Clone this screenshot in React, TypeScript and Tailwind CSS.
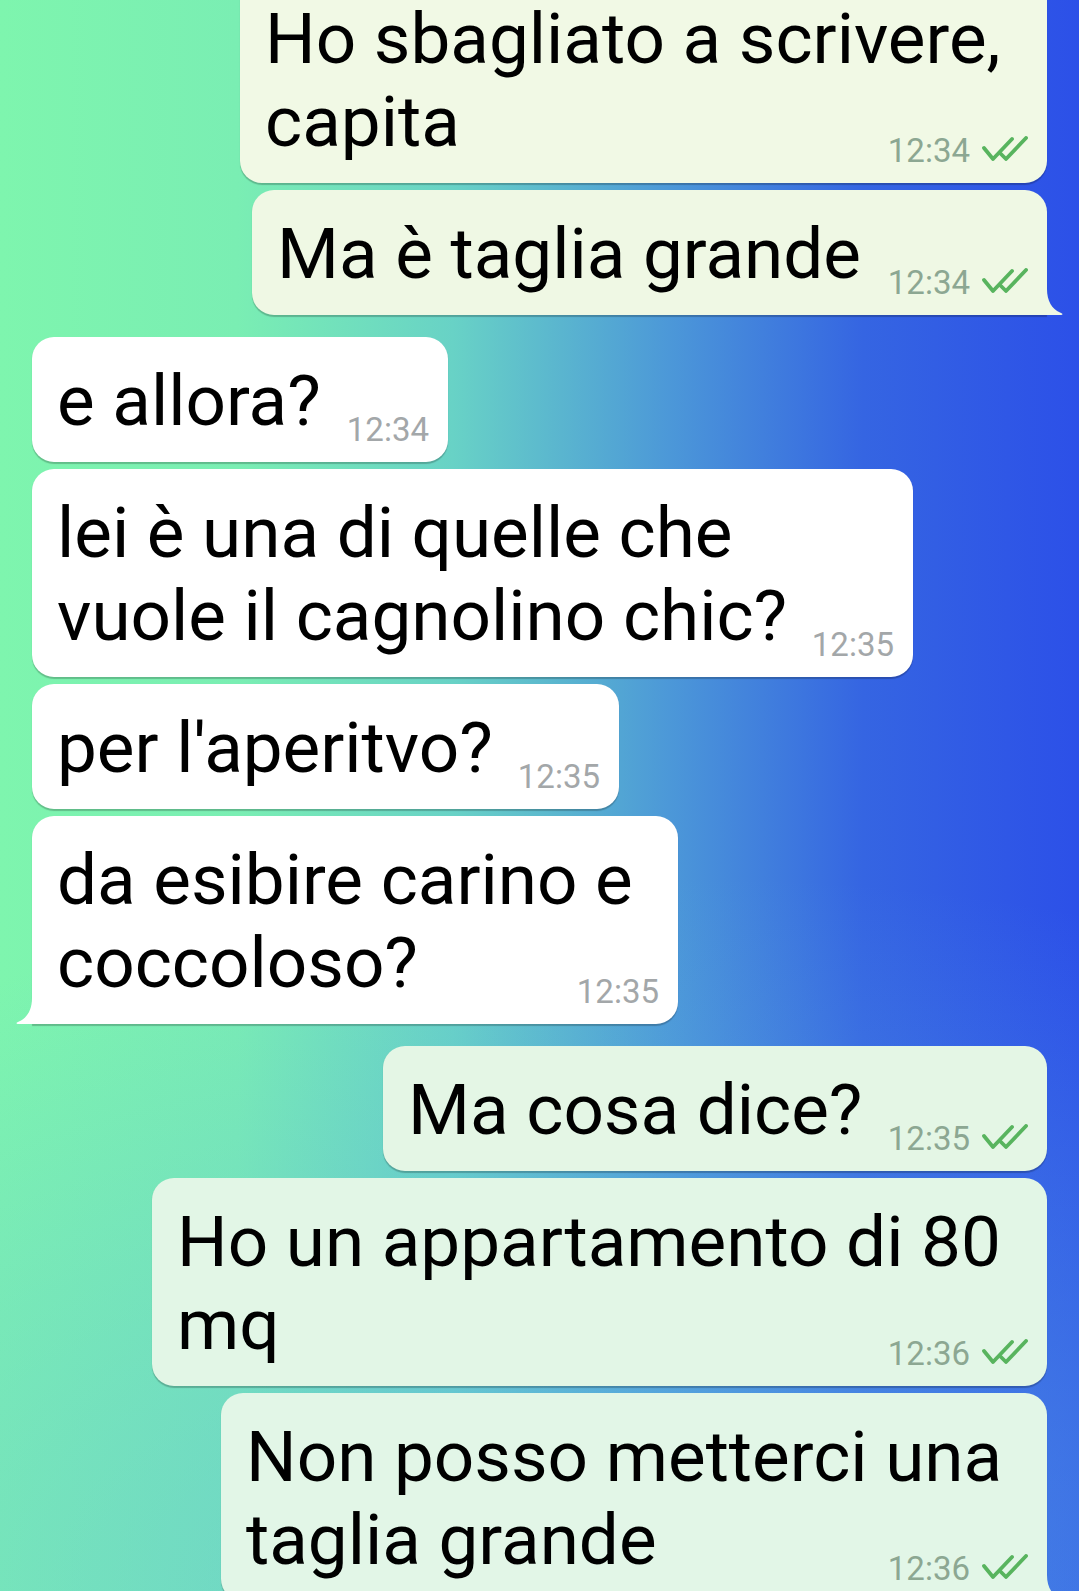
import React from "react";

type Msg = {
  lines: string[];
  time: string;
  out: boolean;
  width: string;
  bg: string;
  gap: string;
  tail?: boolean;
};

const messages: Msg[] = [
  { lines: ["Ho sbagliato a scrivere,", "capita"], time: "12:34", out: true, width: "w-[807px]", bg: "bg-[#f1f9e5]", gap: "mt-0" },
  { lines: ["Ma è taglia grande"], time: "12:34", out: true, width: "w-[795px]", bg: "bg-[#eff8e4]", gap: "mt-[7px]", tail: true },
  { lines: ["e allora?"], time: "12:34", out: false, width: "w-[416px]", bg: "bg-white", gap: "mt-[22px]" },
  { lines: ["lei è una di quelle che", "vuole il cagnolino chic?"], time: "12:35", out: false, width: "w-[881px]", bg: "bg-white", gap: "mt-[7px]" },
  { lines: ["per l'aperitvo?"], time: "12:35", out: false, width: "w-[587px]", bg: "bg-white", gap: "mt-[7px]" },
  { lines: ["da esibire carino e", "coccoloso?"], time: "12:35", out: false, width: "w-[646px]", bg: "bg-white", gap: "mt-[7px]", tail: true },
  { lines: ["Ma cosa dice?"], time: "12:35", out: true, width: "w-[664px]", bg: "bg-[#e4f6e5]", gap: "mt-[22px]" },
  { lines: ["Ho un appartamento di 80", "mq"], time: "12:36", out: true, width: "w-[895px]", bg: "bg-[#e2f6e6]", gap: "mt-[7px]" },
  { lines: ["Non posso metterci una", "taglia grande"], time: "12:36", out: true, width: "w-[826px]", bg: "bg-[#e2f6e7]", gap: "mt-[7px]", tail: true },
];

const DoubleCheck = () => (
  <svg width="46" height="25" viewBox="0 0 46 25" fill="none" stroke="#58b45e" strokeWidth="3.8" strokeLinecap="round" strokeLinejoin="round">
    <path d="M2 12 L11 23 L30 3" />
    <path d="M19 18 L24 23 L44 2" />
  </svg>
);

const Tail = ({ out, fill }: { out: boolean; fill: string }) => (
  <svg
    width="17"
    height="26"
    viewBox="0 0 17 26"
    className={out ? "absolute bottom-0 left-full" : "absolute bottom-0 right-full -scale-x-100"}
  >
    <path d="M0 0 C0 12 5 20 13 23.5 C16.5 24.8 16 26 13.5 26 L0 26 Z" fill={fill} />
  </svg>
);

const tailFill = (bg: string) => {
  const m = bg.match(/#([0-9a-f]{6})/);
  return m ? `#${m[1]}` : "#ffffff";
};

const Bubble = ({ msg }: { msg: Msg }) => {
  const last = msg.lines[msg.lines.length - 1];
  const rest = msg.lines.slice(0, -1);
  const corner = msg.tail ? (msg.out ? "rounded-br-none" : "rounded-bl-none") : "";
  return (
    <div
      className={`relative ${msg.width} ${msg.bg} ${msg.gap} ${corner} ${
        msg.out ? "self-end mr-[32px]" : "self-start ml-[32px]"
      } rounded-[22px] pl-[25px] pr-[19px] pt-[22px] pb-[20px] shadow-[0_1.5px_1px_rgba(0,0,0,0.22)]`}
    >
      {rest.map((line) => (
        <div key={line} className="whitespace-nowrap text-[71px] leading-[83px] text-black">
          {line}
        </div>
      ))}
      <div className="flex items-end justify-between">
        <span className="whitespace-nowrap text-[71px] leading-[83px] text-black">{last}</span>
        <div className="mb-[-4px] flex items-end gap-[12px]">
          <span className={`text-[33px] leading-[32px] ${msg.out ? "text-[#8ca792]" : "text-[#a3a7a9]"}`}>
            {msg.time}
          </span>
          {msg.out && (
            <div className="mb-[6px]">
              <DoubleCheck />
            </div>
          )}
        </div>
      </div>
      {msg.tail && <Tail out={msg.out} fill={tailFill(msg.bg)} />}
    </div>
  );
};

export default function App() {
  return (
    <div className="h-[1591px] w-[1079px] overflow-hidden bg-[image:radial-gradient(120%_45%_at_62%_100%,rgba(96,180,225,0.55),rgba(96,180,225,0)),linear-gradient(to_right,#7ef5ae_0%,#7aeeb3_22%,#68d2c6_42%,#4c98d8_62%,#3565e2_80%,#2c50e8_100%)] font-['Roboto',sans-serif]">
      <div className="mt-[-25px] flex flex-col">
        {messages.map((m, i) => (
          <Bubble key={i} msg={m} />
        ))}
      </div>
    </div>
  );
}
